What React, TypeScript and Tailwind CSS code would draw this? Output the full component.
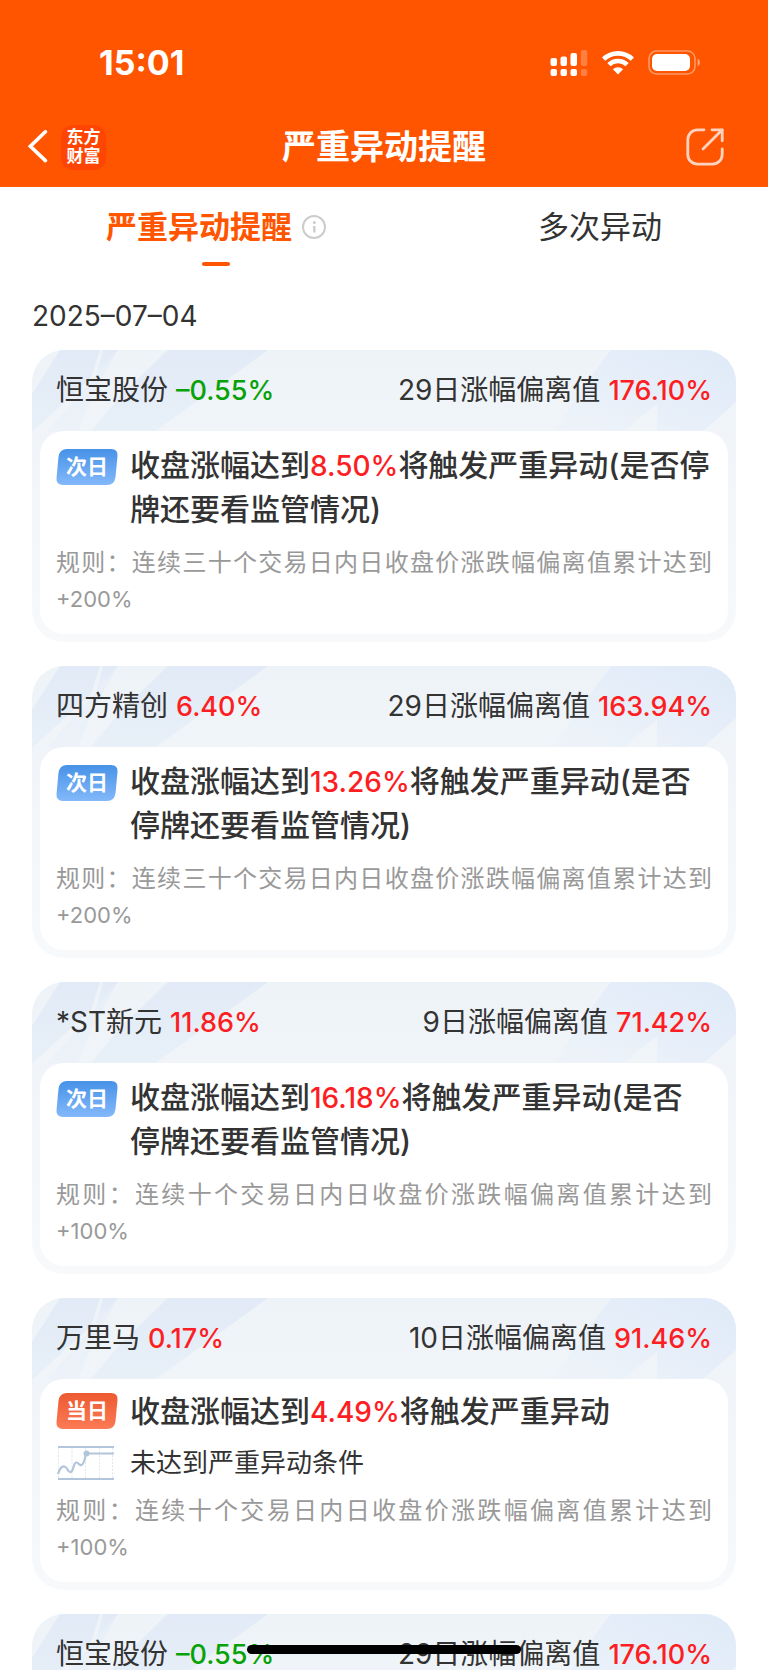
import React from "react";

type Alert = {
  name: string;
  change: string;
  days: number;
  deviation: string;
  kind: "next" | "today";
  trigger: string;
  suffix: string;
  status?: string;
  rule: string;
  threshold: string;
};

const ALERTS: Alert[] = [
  {
    name: "恒宝股份",
    change: "–0.55%",
    days: 29,
    deviation: "176.10%",
    kind: "next",
    trigger: "8.50%",
    suffix: "将触发严重异动(是否停牌还要看监管情况)",
    rule: "规则：连续三十个交易日内日收盘价涨跌幅偏离值累计达到",
    threshold: "+200%",
  },
  {
    name: "四方精创",
    change: "6.40%",
    days: 29,
    deviation: "163.94%",
    kind: "next",
    trigger: "13.26%",
    suffix: "将触发严重异动(是否停牌还要看监管情况)",
    rule: "规则：连续三十个交易日内日收盘价涨跌幅偏离值累计达到",
    threshold: "+200%",
  },
  {
    name: "*ST新元",
    change: "11.86%",
    days: 9,
    deviation: "71.42%",
    kind: "next",
    trigger: "16.18%",
    suffix: "将触发严重异动(是否停牌还要看监管情况)",
    rule: "规则：连续十个交易日内日收盘价涨跌幅偏离值累计达到",
    threshold: "+100%",
  },
  {
    name: "万里马",
    change: "0.17%",
    days: 10,
    deviation: "91.46%",
    kind: "today",
    trigger: "4.49%",
    suffix: "将触发严重异动",
    status: "未达到严重异动条件",
    rule: "规则：连续十个交易日内日收盘价涨跌幅偏离值累计达到",
    threshold: "+100%",
  },
  {
    name: "恒宝股份",
    change: "–0.55%",
    days: 29,
    deviation: "176.10%",
    kind: "next",
    trigger: "8.50%",
    suffix: "将触发严重异动(是否停牌还要看监管情况)",
    rule: "规则：连续三十个交易日内日收盘价涨跌幅偏离值累计达到",
    threshold: "+200%",
  },
];

function SignalIcon() {
  return (
    <svg width="38" height="26" viewBox="0 0 38 26" fill="#fff" aria-hidden="true">
      <rect x="0.500" y="8" width="6.500" height="8" rx="2" />
      <rect x="10.500" y="6.500" width="6.500" height="9.500" rx="2" />
      <rect x="20.500" y="3" width="6.500" height="13" rx="2" />
      <rect x="30.800" y="0" width="6.500" height="16" rx="2" opacity="0.25" />
      <rect x="0.500" y="19" width="6.500" height="7" rx="2" />
      <rect x="10.500" y="19" width="6.500" height="7" rx="2" />
      <rect x="20.500" y="19" width="6.500" height="7" rx="2" />
      <rect x="30.800" y="19" width="6.500" height="7" rx="2" opacity="0.25" />
    </svg>
  );
}

function WifiIcon() {
  return (
    <svg width="32" height="24" viewBox="0 0 32 24" fill="none" stroke="#fff" strokeWidth="4.6" aria-hidden="true">
      <path d="M1.6 8.2a20.6 20.6 0 0 1 28.8 0" />
      <path d="M6.9 13.7a13 13 0 0 1 18.2 0" />
      <path d="M10.9 18.3a7.6 7.6 0 0 1 10.2 0L16 23.6z" fill="#fff" stroke="none" />
    </svg>
  );
}

function BatteryIcon() {
  return (
    <svg width="53" height="25" viewBox="0 0 53 25" aria-hidden="true">
      <rect x="1" y="1" width="46" height="23" rx="7.5" fill="none" stroke="#fff" strokeOpacity="0.4" strokeWidth="1.6" />
      <rect x="4" y="4" width="38" height="17" rx="5" fill="#fff" />
      <path d="M49.6 8.800c3 1.200 3 6.200 0 7.400z" fill="#fff" fillOpacity="0.5" />
    </svg>
  );
}

function BackIcon() {
  return (
    <svg width="20" height="34" viewBox="0 0 20 34" fill="none" stroke="#fff" strokeWidth="3.6" strokeLinecap="round" strokeLinejoin="miter" aria-hidden="true">
      <path d="M17.400 1.800 2.400 16.200l15 14.400" />
    </svg>
  );
}

function ShareIcon() {
  return (
    <svg width="38" height="38" viewBox="0 0 38 38" fill="none" stroke="#ffd3bf" strokeWidth="2.8" strokeLinecap="round" strokeLinejoin="round" aria-hidden="true">
      <path d="M18 1.800h-6.500A9.700 9.700 0 0 0 1.800 11.500v15a9.700 9.700 0 0 0 9.700 9.700h15a9.700 9.700 0 0 0 9.700-9.700V21" />
      <path d="M26 1.800h10.200v11" />
      <path d="M36 2 17 21" />
    </svg>
  );
}

function InfoIcon() {
  return (
    <svg width="24" height="24" viewBox="0 0 24 24" fill="none" aria-hidden="true">
      <circle cx="12" cy="12" r="11" stroke="#ccc" strokeWidth="2" />
      <circle cx="12.300" cy="7.600" r="1.500" fill="#ccc" />
      <path d="M12.300 11v6.500" stroke="#ccc" strokeWidth="2.400" />
    </svg>
  );
}

function ChartIcon() {
  return (
    <svg width="58" height="36" viewBox="0 0 58 36" fill="none" aria-hidden="true">
      <path d="M2.500 3v30M16 3v30M29.500 3v30M43.500 3v30M56.500 3v30" stroke="#dfe6ef" strokeWidth="1" strokeDasharray="2 1.500" />
      <path d="M2 2h56M2 34h56" stroke="#b3c5da" strokeWidth="2" />
      <path d="M30 8.600h28" stroke="#b3c5da" strokeWidth="2" />
      <path d="M2 29c2-6 4.500-8 6.500-7.500 3.500 1 3 6 6 5.500 3.500-.600 2.500-9.500 6-9.500 2.500 0 2.500 3.500 5 2.500s3.500-6 4.500-11.400" stroke="#b3c5da" strokeWidth="2.200" />
      <circle cx="30.500" cy="8.600" r="3" fill="#b3c5da" />
    </svg>
  );
}

function CardDecor() {
  return (
    <div className="pointer-events-none absolute inset-x-0 top-0 flex justify-between" aria-hidden="true">
      <svg width="240" height="92" viewBox="0 0 240 92">
        <defs>
          <linearGradient id="stripe" x1="0" y1="0" x2="0" y2="1">
            <stop offset="0" stopColor="#e1eaf6" />
            <stop offset="1" stopColor="#e8f0f8" />
          </linearGradient>
        </defs>
        <g fill="url(#stripe)">
          <path d="M28 0H68L59 28 0 82V44z" />
          <path d="M71 0H86L64 26z" />
          <path d="M64 26 86 0 60 46 46 82H14z" opacity="0.5" />
          <path d="M136 0H236L122 82H58L90 44z" />
        </g>
      </svg>
      <svg width="200" height="92" viewBox="0 0 200 92">
        <defs>
          <linearGradient id="wing" x1="0" y1="1" x2="1" y2="0">
            <stop offset="0" stopColor="#eaf1f9" stopOpacity="0.3" />
            <stop offset="0.500" stopColor="#e6eef9" />
            <stop offset="1" stopColor="#dfeaf8" />
          </linearGradient>
        </defs>
        <path d="M75 0H200V52L166 82H121V54L86 82H16L60 20z" fill="url(#wing)" />
      </svg>
    </div>
  );
}

function Badge({ kind }: { kind: Alert["kind"] }) {
  const today = kind === "today";
  return (
    <span className="relative flex h-9 w-[62px] shrink-0 items-center justify-center">
      <svg className="absolute inset-0" width="62" height="36" viewBox="0 0 62 36" aria-hidden="true">
        <defs>
          <linearGradient id="badge-next" x1="0" y1="0" x2="0" y2="1">
            <stop offset="0" stopColor="#4792e8" />
            <stop offset="1" stopColor="#83b8fa" />
          </linearGradient>
          <linearGradient id="badge-today" x1="0" y1="0" x2="0" y2="1">
            <stop offset="0" stopColor="#ed5a31" />
            <stop offset="1" stopColor="#fb7a55" />
          </linearGradient>
        </defs>
        <path
          d="M11 0H55Q62 0 61.500 7L59.500 28Q58.500 36 51 36H7Q0 36 .500 29L2.500 8Q3.500 0 11 0z"
          fill={today ? "url(#badge-today)" : "url(#badge-next)"}
        />
      </svg>
      <span className="relative text-[21px] leading-6 font-bold text-white">{today ? "当日" : "次日"}</span>
    </span>
  );
}

function AlertCard({ item }: { item: Alert }) {
  const falling = item.change.startsWith("–");
  return (
    <article className="relative overflow-hidden rounded-[32px] bg-linear-to-b from-[#eef3f8] to-[#f7f9fb] p-2 pt-0">
      <CardDecor />
      <header className="relative flex h-[81px] items-center justify-between px-4 text-[28px] leading-9">
        <h2 className="flex items-baseline gap-2">
          <span>{item.name}</span>
          <span className={falling ? "text-[27px] font-medium text-[#07a207]" : "text-[27px] font-medium text-[#fc1e22]"}>
            {item.change}
          </span>
        </h2>
        <p className="flex items-baseline gap-2">
          <span>{item.days}日涨幅偏离值</span>
          <span className="text-[27px] font-medium text-[#fc1e22]">{item.deviation}</span>
        </p>
      </header>
      <div className={item.status ? "relative rounded-3xl bg-white px-4 pt-[10px] pb-[17px]" : "relative rounded-3xl bg-white px-4 pt-3 pb-[17px]"}>
        <div className="flex gap-3">
          <span className={item.status ? "pt-1" : "pt-[6px]"}>
            <Badge kind={item.kind} />
          </span>
          <p className="text-[30px] leading-[44px] font-medium">
            收盘涨幅达到<span className="text-[28px] leading-none text-[#fc1e22]">{item.trigger}</span>
            {item.suffix}
          </p>
        </div>
        {item.status && (
          <div className="mt-3 flex items-center gap-4">
            <ChartIcon />
            <p className="text-[26px] leading-9">{item.status}</p>
          </div>
        )}
        <p className={item.status ? "mt-3 text-justify text-2xl leading-9 text-[#999]" : "mt-[14px] text-justify text-2xl leading-9 text-[#999]"}>
          {item.rule}
          <span className="text-[22px] leading-none">{item.threshold}</span>
        </p>
      </div>
    </article>
  );
}

export default function App() {
  return (
    <div className="relative flex h-screen flex-col overflow-hidden bg-white font-[Inter,'Noto_Sans_CJK_SC',sans-serif] text-[#333]">
      <header className="shrink-0 bg-[#ff5500] text-white">
        <div className="flex h-[107px] items-center justify-between pt-[18px] pr-[67px] pl-[99px]">
          <time className="text-[34px] leading-10 font-bold">15:01</time>
          <div className="flex items-center gap-[14px]">
            <SignalIcon />
            <WifiIcon />
            <BatteryIcon />
          </div>
        </div>
        <nav className="grid h-20 grid-cols-[1fr_auto_1fr] items-center px-7">
          <div className="flex items-center gap-[13px]">
            <button type="button" aria-label="返回">
              <BackIcon />
            </button>
            <a
              href="#home"
              className="flex size-[45px] flex-col items-center justify-center rounded-xl bg-[#ff4503] text-[17px] leading-[19px] font-bold"
            >
              <span>东方</span>
              <span>财富</span>
            </a>
          </div>
          <h1 className="text-[34px] leading-[44px] font-bold">严重异动提醒</h1>
          <button type="button" aria-label="分享" className="mr-4 justify-self-end">
            <ShareIcon />
          </button>
        </nav>
      </header>

      <div role="tablist" className="flex h-[79px] shrink-0 justify-around text-[31px] leading-10">
        <button type="button" role="tab" aria-selected="true" className="relative flex items-center gap-[10px] font-bold text-[#ff5500]">
          严重异动提醒
          <InfoIcon />
          <span className="absolute bottom-0 left-1/2 h-1 w-7 -translate-x-1/2 rounded-full bg-[#ff5500]" />
        </button>
        <button type="button" role="tab" aria-selected="false">
          多次异动
        </button>
      </div>

      <main className="min-h-0 flex-1 overflow-y-auto px-8 pt-8 [scrollbar-width:none]">
        <p className="mb-4 text-[28px] leading-9">2025–07–04</p>
        <div className="flex flex-col gap-6">
          {ALERTS.map((item, i) => (
            <AlertCard key={i} item={item} />
          ))}
        </div>
      </main>

      <div className="absolute bottom-4 left-1/2 h-[9px] w-[274px] -translate-x-1/2 rounded-full bg-black" />
    </div>
  );
}
